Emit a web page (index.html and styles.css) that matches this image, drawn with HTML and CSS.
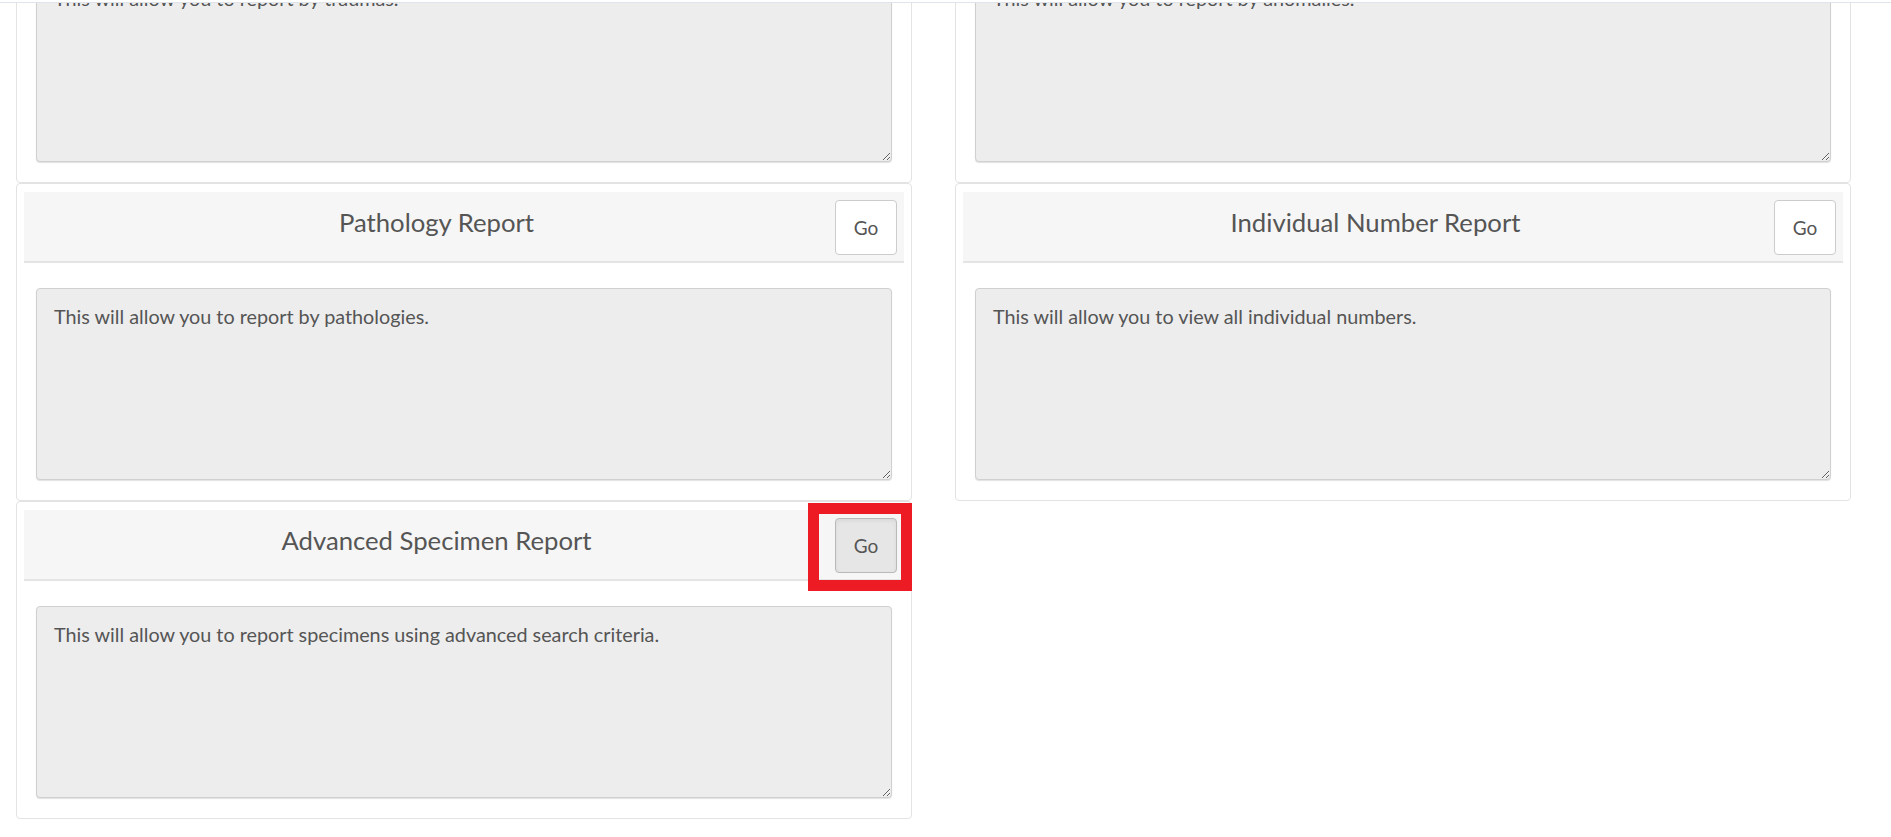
FILE: index.html
```html
<!DOCTYPE html>
<html lang="en">
<head>
<meta charset="utf-8">
<title>Reports</title>
<link rel="stylesheet" href="styles.css">
</head>
<body>
<div class="topbar"></div>
<main class="reports">
  <div class="col">
    <section class="card">
      <header class="card-head"><h3 class="card-title">Trauma Report</h3><button class="go">Go</button></header>
      <div class="card-body"><textarea class="desc" readonly>This will allow you to report by traumas.</textarea></div>
    </section>
    <section class="card">
      <header class="card-head"><h3 class="card-title">Pathology Report</h3><button class="go">Go</button></header>
      <div class="card-body"><textarea class="desc" readonly>This will allow you to report by pathologies.</textarea></div>
    </section>
    <section class="card">
      <header class="card-head"><h3 class="card-title">Advanced Specimen Report</h3><button class="go go-active">Go</button><span class="highlight"></span></header>
      <div class="card-body"><textarea class="desc" readonly>This will allow you to report specimens using advanced search criteria.</textarea></div>
    </section>
  </div>
  <div class="col">
    <section class="card">
      <header class="card-head"><h3 class="card-title">Anomaly Report</h3><button class="go">Go</button></header>
      <div class="card-body"><textarea class="desc" readonly>This will allow you to report by anomalies.</textarea></div>
    </section>
    <section class="card">
      <header class="card-head"><h3 class="card-title">Individual Number Report</h3><button class="go">Go</button></header>
      <div class="card-body"><textarea class="desc" readonly>This will allow you to view all individual numbers.</textarea></div>
    </section>
  </div>
</main>
</body>
</html>
```
FILE: styles.css
```css
* { box-sizing: border-box; }
html, body { margin: 0; padding: 0; background: #fff; }
body {
  font-family: Lato, "Open Sans", "Liberation Sans", sans-serif;
  color: #555;
  overflow: hidden;
}
.topbar {
  position: fixed;
  top: 0; left: 0; right: 0;
  height: 3px;
  background: #fff;
  border-bottom: 1px solid #dfe3ea;
  z-index: 5;
}
.reports {
  display: grid;
  grid-template-columns: 896px 896px;
  column-gap: 43px;
  padding-left: 16px;
  margin-top: -135px;
  align-items: start;
}
.col { display: flex; flex-direction: column; }
.card {
  height: 318px;
  border: 1px solid #e3e3e3;
  border-radius: 4px;
  padding: 8px 7px 7px;
  background: #fff;
}
.card-head {
  position: relative;
  display: flex;
  align-items: flex-start;
  height: 71px;
  padding: 8px 7px 0 0;
  background: #f6f6f6;
  border-bottom: 2px solid #e4e4e4;
}
.card-title {
  flex: 1;
  margin: 0;
  padding: 7px 0 0 14px;
  text-align: center;
  font-size: 25.7px;
  font-weight: 400;
  line-height: 30px;
  color: #555;
}
.go {
  width: 62px;
  height: 55px;
  border: 1px solid #ccc;
  border-radius: 4px;
  background: #fff;
  color: #555;
  font-family: inherit;
  font-size: 19px;
  padding: 0;
}
.go-active {
  background: #e6e6e6;
  border-color: #b9b9b9;
  box-shadow: inset 0 2px 4px rgba(0,0,0,.06);
}
.highlight {
  position: absolute;
  left: 784px;
  top: -7px;
  width: 104px;
  height: 88px;
  border: 11px solid #ed1c24;
  pointer-events: none;
}
.card-body { padding: 25px 12px 13px; }
.desc {
  display: block;
  width: 100%;
  height: 192px;
  margin: 0;
  padding: 14px 17px;
  border: 1px solid #d0d0d0;
  border-radius: 4px;
  background: #ededed;
  box-shadow: 0 1px 1px rgba(0,0,0,.12);
  font-family: Lato, "Open Sans", "Liberation Sans", sans-serif;
  font-size: 19.8px;
  line-height: 26px;
  color: #555;
  resize: both;
  outline: none;
}
```
